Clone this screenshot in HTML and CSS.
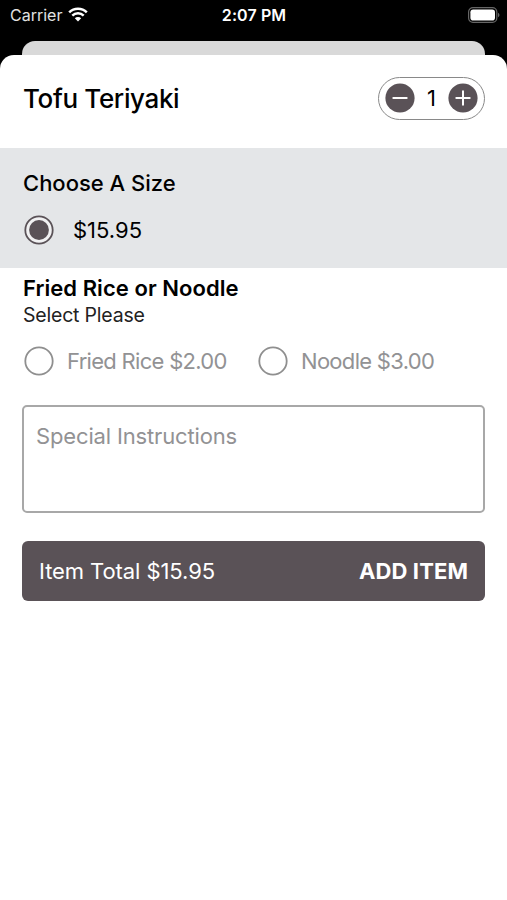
FILE: index.html
```html
<!DOCTYPE html>
<html lang="en">
<head>
<meta charset="utf-8">
<meta name="viewport" content="width=device-width">
<title>Tofu Teriyaki</title>
<link rel="stylesheet" href="styles.css">
</head>
<body>
<header class="status">
  <div class="carrier"><span class="t-carrier">Carrier</span>
    <svg class="wifi" viewBox="0 0 20 15"><path d="M10 14.5 6.8 11.2a4.6 4.6 0 0 1 6.4 0z" fill="#fff"/><path d="M4.3 8.6a8.2 8.2 0 0 1 11.4 0M1.2 5.3a12.6 12.6 0 0 1 17.6 0" fill="none" stroke="#fff" stroke-width="2.5"/></svg>
  </div>
  <div class="time"><span class="t-time">2:07 PM</span></div>
  <svg class="battery" viewBox="0 0 32 16"><rect x=".6" y=".6" width="28.2" height="14.8" rx="4.4" fill="none" stroke="#666" stroke-width="1.2"/><rect x="2.4" y="2.4" width="24.6" height="11.2" rx="2.8" fill="#fff"/><path d="M30 5.8q1.5.7 1.5 2.2t-1.5 2.2z" fill="#666"/></svg>
</header>
<div class="behind"></div>
<main class="sheet">
  <section class="head">
    <h1 class="t-title">Tofu Teriyaki</h1>
    <div class="stepper">
      <svg class="round" viewBox="0 0 30 30"><circle cx="15" cy="15" r="14.6"/><path d="M8.3 15h13.4"/></svg>
      <span class="t-qty">1</span>
      <svg class="round" viewBox="0 0 30 30"><circle cx="15" cy="15" r="14.6"/><path d="M8.3 15h13.4M15 8.3v13.4"/></svg>
    </div>
  </section>
  <section class="size">
    <h2 class="t-size">Choose A Size</h2>
    <div class="option"><svg class="radio" viewBox="0 0 30 30"><circle cx="15" cy="15" r="13.7" fill="#f1f1f2" stroke="#5a5257" stroke-width="1.8"/><circle cx="15" cy="15" r="9.9" fill="#5a5257"/></svg><span class="t-price">$15.95</span></div>
  </section>
  <section class="extras">
    <h2 class="t-extra">Fried Rice or Noodle</h2>
    <p class="t-select">Select Please</p>
    <div class="choices">
      <div class="choice first"><svg class="radio" viewBox="0 0 30 30"><circle cx="15" cy="15" r="13.7" fill="#fff" stroke="#8f8f8f" stroke-width="1.8"/></svg><span class="t-rice">Fried Rice $2.00</span></div>
      <div class="choice"><svg class="radio" viewBox="0 0 30 30"><circle cx="15" cy="15" r="13.7" fill="#fff" stroke="#8f8f8f" stroke-width="1.8"/></svg><span class="t-noodle">Noodle $3.00</span></div>
    </div>
  </section>
  <div class="notes"><span class="t-notes">Special Instructions</span></div>
  <div class="add"><span class="t-total">Item Total $15.95</span><span class="t-add">ADD ITEM</span></div>
</main>
</body>
</html>
```

FILE: styles.css
```css
* { box-sizing: border-box; }
body { margin: 0; width: 507px; height: 900px; overflow: hidden; background: #000; color: #000; font-family: Inter, "Liberation Sans", sans-serif; display: flex; flex-direction: column; }
h1, h2, p { margin: 0; }
span, h1, h2, p { white-space: nowrap; }
svg { display: block; flex: none; }
.status { height: 41px; padding: 0 7px 12px 10px; display: grid; grid-template-columns: 1fr auto 1fr; align-items: center; color: #fff; }
.carrier { display: flex; align-items: center; gap: 6px; color: #e2e2e2; }
.wifi { width: 20px; height: 15px; }
.battery { width: 32px; height: 16px; justify-self: end; }
.time { padding-right: 2px; }
.t-carrier { font-size: 16px; }
.t-time { font-size: 16px; font-weight: 600; letter-spacing: .1px; }
.behind { height: 14px; margin: 0 22px; background: #d9d9d9; border-radius: 13px 13px 0 0; }
.sheet { flex: 1; background: #fff; border-radius: 14px 14px 0 0; }
.head { height: 93px; padding: 0 22px 7px 23px; display: flex; align-items: center; justify-content: space-between; }
.t-title { font-size: 26px; font-weight: 500; letter-spacing: -.35px; }
.stepper { width: 107px; height: 43px; border: 1px solid #898989; border-radius: 22px; padding: 0 6px; display: flex; align-items: center; justify-content: space-between; }
.round { width: 30px; height: 30px; fill: #5a5257; stroke: #fff; stroke-width: 2; stroke-linecap: round; }
.round circle { stroke: none; }
.t-qty { font-size: 22px; }
.size { height: 120px; background: #e4e6e8; padding: 21px 23px 0; }
.t-size, .t-extra { font-size: 22px; line-height: 28px; font-weight: 600; }
.t-size { font-weight: 550; }
.t-extra { letter-spacing: .05px; }
.option { display: flex; align-items: center; gap: 19px; height: 30px; margin-top: 18px; }
.radio { width: 30px; height: 30px; margin-left: 1px; }
.t-price, .t-rice, .t-noodle, .t-notes, .t-total, .t-add { font-size: 22px; line-height: 30px; }
.extras { height: 137px; padding: 6px 23px 0; }
.t-select { font-size: 19.5px; line-height: 27px; color: #222; letter-spacing: -.2px; }
.choices { display: flex; margin-top: 17px; color: #929294; }
.choice { display: flex; gap: 13px; align-items: center; }
.choice .t-rice, .choice .t-noodle { letter-spacing: -.7px; }
.first { width: 234px; }
.notes { height: 108px; margin: 0 22px; border: 2px solid #a8a8a8; border-radius: 5px; padding: 14px 12px; color: #929294; }
.t-notes { letter-spacing: -.15px; }
.t-total { letter-spacing: -.08px; }
.add { height: 60px; margin: 28px 22px 0; padding: 0 17px; background: #5a5257; border-radius: 6px; color: #fff; display: flex; align-items: center; justify-content: space-between; }
.t-add { font-weight: 650; letter-spacing: .1px; }
```
